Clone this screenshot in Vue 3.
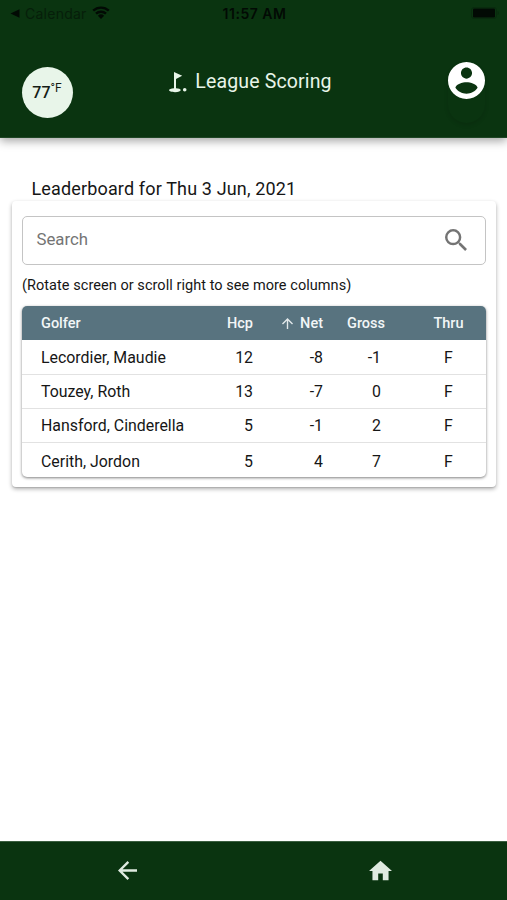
<script setup>
const columns = [
  { key: 'golfer', label: 'Golfer' },
  { key: 'hcp', label: 'Hcp' },
  { key: 'net', label: 'Net', sorted: true },
  { key: 'gross', label: 'Gross' },
  { key: 'thru', label: 'Thru' },
]
const rows = [
  { golfer: 'Lecordier, Maudie', hcp: 12, net: -8, gross: -1, thru: 'F' },
  { golfer: 'Touzey, Roth', hcp: 13, net: -7, gross: 0, thru: 'F' },
  { golfer: 'Hansford, Cinderella', hcp: 5, net: -1, gross: 2, thru: 'F' },
  { golfer: 'Cerith, Jordon', hcp: 5, net: 4, gross: 7, thru: 'F' },
]
</script>

<template>
  <div class="screen">
    <header class="header">
      <div class="status">
        <div class="status-left">
          <svg class="back-tri" viewBox="0 0 10 10"><path d="M0 5 10 .4v9.2z" /></svg>
          <span class="status-app">Calendar</span>
          <svg class="wifi" viewBox="0 0 18 13">
            <path d="M1.2 4.7a11.3 11.3 0 0 1 15.6 0M4 7.7a7.2 7.2 0 0 1 10 0" fill="none" stroke="#020a04" stroke-width="2.4" />
            <path d="M9 13 5.9 9.8a4.5 4.5 0 0 1 6.2 0z" />
          </svg>
        </div>
        <span class="status-time">11:57 AM</span>
        <svg class="battery" viewBox="0 0 28 12">
          <rect x=".5" y=".5" width="25" height="11" rx="2.5" fill="none" stroke="#092b0e" />
          <rect x="2" y="1.5" width="22" height="9" rx="1.2" />
          <path d="M26.5 4v4q1.5-.6 1.5-2t-1.5-2z" fill="#092b0e" />
        </svg>
      </div>
      <div class="toolbar">
        <div class="temp"><span>77</span><sup>°F</sup></div>
        <div class="title">
          <svg class="golf" viewBox="0 0 18 21">
            <path d="M5 0 13.2 3.8 7 7v9.2c2.5.2 4.8.8 4.8 1.9 0 1.2-2.4 2.1-5.8 2.1s-6-.9-6-2.1c0-1 2-1.7 5-1.9z" />
            <circle cx="15.7" cy="17.7" r="1.8" />
          </svg>
          <span>League Scoring</span>
        </div>
        <div class="profile">
          <svg viewBox="2 2 20 20"><path d="M12 2C6.48 2 2 6.48 2 12s4.48 10 10 10 10-4.48 10-10S17.52 2 12 2zm0 3c1.66 0 3 1.34 3 3s-1.34 3-3 3-3-1.34-3-3 1.34-3 3-3zm0 14.2c-2.5 0-4.71-1.28-6-3.22.03-1.99 4-3.08 6-3.08 1.99 0 5.97 1.09 6 3.08-1.29 1.94-3.5 3.22-6 3.22z" /></svg>
        </div>
      </div>
    </header>

    <main class="content">
      <h1 class="heading">Leaderboard for Thu 3 Jun, 2021</h1>
      <section class="card">
        <div class="search">
          <span>Search</span>
          <svg viewBox="3 3 17.5 17.5"><path d="M15.5 14h-.79l-.28-.27A6.471 6.471 0 0 0 16 9.5 6.5 6.5 0 1 0 9.5 16c1.61 0 3.09-.59 4.23-1.57l.27.28v.79l5 4.99L20.49 19l-4.99-5zm-6 0C7.01 14 5 11.99 5 9.5S7.01 5 9.5 5 14 7.01 14 9.5 11.99 14 9.5 14z" /></svg>
        </div>
        <p class="hint">(Rotate screen or scroll right to see more columns)</p>
        <div class="table">
          <div class="row head">
            <div v-for="c in columns" :key="c.key" :class="c.key">
              <svg v-if="c.sorted" class="sort" viewBox="4 4 16 16"><path d="m4 12 1.41 1.41L11 7.83V20h2V7.83l5.58 5.59L20 12l-8-8z" /></svg>
              <span>{{ c.label }}</span>
            </div>
          </div>
          <div v-for="r in rows" :key="r.golfer" class="row">
            <div v-for="c in columns" :key="c.key" :class="c.key">{{ r[c.key] }}</div>
          </div>
        </div>
      </section>
    </main>

    <nav class="nav">
      <svg class="arrow" viewBox="4 4 16 16"><path d="M20 11H7.83l5.59-5.59L12 4l-8 8 8 8 1.41-1.41L7.83 13H20z" /></svg>
      <svg class="home" viewBox="2 3 20 17"><path d="M10 20v-6h4v6h5v-8h3L12 3 2 12h3v8z" /></svg>
    </nav>
  </div>
</template>

<style>
body {
  background: #fff;
}
</style>

<style scoped>
.screen {
  display: flex;
  flex-direction: column;
  height: 900px;
  overflow: hidden;
  font-family: Roboto, sans-serif;
  color: #161616;
}
svg {
  display: block;
  flex: none;
}
.header {
  box-sizing: border-box;
  height: 138px;
  background: #0a3410;
  border-bottom: 1px solid #1f4625;
  box-shadow: 0 3px 9px rgba(0, 0, 0, 0.36);
}
.status {
  display: grid;
  grid-template-columns: 1fr auto 1fr;
  align-items: center;
  height: 27px;
  padding: 0 8px 0 10px;
  font-family: Inter, sans-serif;
  color: #020a04;
  fill: #020a04;
}
.status-left {
  display: flex;
  align-items: center;
}
.back-tri {
  width: 10px;
  height: 9px;
  margin-right: 5px;
}
.status-app {
  width: 61px;
  font-size: 14px;
  letter-spacing: 0.25px;
  color: #061e0a;
  white-space: nowrap;
}
.wifi {
  width: 18px;
  height: 13px;
  margin: -2px 0 0 6px;
}
.status-time {
  font-size: 14px;
  font-weight: 600;
  letter-spacing: 0.5px;
}
.battery {
  width: 28px;
  height: 12px;
  margin-top: -1px;
  justify-self: end;
}
.toolbar {
  display: flex;
  justify-content: space-between;
  align-items: flex-start;
  padding: 34px 22px 0;
}
.temp {
  box-sizing: border-box;
  display: flex;
  justify-content: center;
  align-items: center;
  width: 51px;
  height: 51px;
  margin-top: 6px;
  padding-right: 1px;
  border-radius: 50%;
  background: #e8f5e9;
  font-size: 16px;
  font-weight: 500;
  color: #151c16;
}
.temp sup {
  margin-top: -10px;
  font-size: 12px;
  line-height: 12px;
  font-weight: 400;
  vertical-align: baseline;
}
.title {
  display: flex;
  gap: 8px;
  margin: 8px 0 0 -20px;
  color: #e8f5e9;
  fill: #e8f5e9;
  font-size: 19.5px;
  line-height: 26px;
  letter-spacing: 0.15px;
}
.golf {
  width: 18px;
  height: 21px;
  margin-top: 3px;
}
.profile {
  width: 37px;
  height: 61px;
  margin-top: 0.5px;
  border-radius: 19px;
  box-shadow: 0 2px 4px rgba(0, 0, 0, 0.13);
  fill: #fff;
}
.profile svg {
  width: 37px;
  height: 37px;
}
.content {
  flex: 1;
  padding: 39px 11px 0 12px;
}
.heading {
  margin: 0 0 1px 19.5px;
  font-size: 18px;
  line-height: 23px;
  font-weight: 400;
  letter-spacing: 0.15px;
}
.card {
  box-sizing: border-box;
  height: 286px;
  padding: 15px 10px 0;
  border-radius: 4px;
  box-shadow: 0 2px 4px rgba(0, 0, 0, 0.32), 0 1px 1px rgba(0, 0, 0, 0.1);
}
.search {
  box-sizing: border-box;
  display: flex;
  align-items: center;
  justify-content: space-between;
  height: 49px;
  padding: 0 18px 2px 13.5px;
  border: 1px solid #c4c4c4;
  border-radius: 5px;
  font-size: 16.8px;
  color: #747474;
  fill: #747474;
}
.search span {
  padding-bottom: 2px;
}
.search svg {
  width: 22px;
  height: 22px;
}
.hint {
  margin: 11px 0 10px;
  font-size: 14.5px;
  line-height: 20px;
  letter-spacing: 0.05px;
  white-space: nowrap;
}
.table {
  border-radius: 5px;
  overflow: hidden;
  box-shadow: 0 1px 3px rgba(0, 0, 0, 0.5);
}
.row {
  box-sizing: border-box;
  display: grid;
  grid-template-columns: 161px 70px 70px 70px 1fr;
  align-items: center;
  height: 34.2px;
  padding-top: 1px;
  border-bottom: 1px solid #e2e2e2;
  font-size: 15.9px;
}
.row:last-child {
  height: 34.5px;
  padding-top: 2px;
  border-bottom: 0;
}
.head {
  height: 34.4px;
  padding-top: 0;
  border-bottom: 0;
  background: #58737f;
  color: #f2f6f7;
  fill: #e1e8ea;
  font-size: 14.5px;
  font-weight: 500;
}
.golfer {
  padding-left: 19px;
  white-space: nowrap;
}
.hcp,
.net,
.gross {
  text-align: right;
}
.gross {
  padding-right: 12px;
}
.head .gross {
  padding-right: 8px;
}
.head .net {
  display: flex;
  justify-content: flex-end;
  align-items: center;
  gap: 7px;
}
.sort {
  width: 11px;
  height: 11px;
}
.thru {
  margin-left: 38px;
  width: 35px;
  text-align: center;
}
.nav {
  box-sizing: border-box;
  display: grid;
  grid-template-columns: 1fr 1fr;
  align-items: center;
  justify-items: center;
  height: 59px;
  padding-bottom: 1px;
  background: #0a3410;
  border-top: 1px solid #3b5e40;
  fill: #dfeae0;
}
.arrow {
  width: 19px;
  height: 19px;
  margin-left: 1px;
}
.home {
  width: 23px;
  height: 21px;
}
</style>
